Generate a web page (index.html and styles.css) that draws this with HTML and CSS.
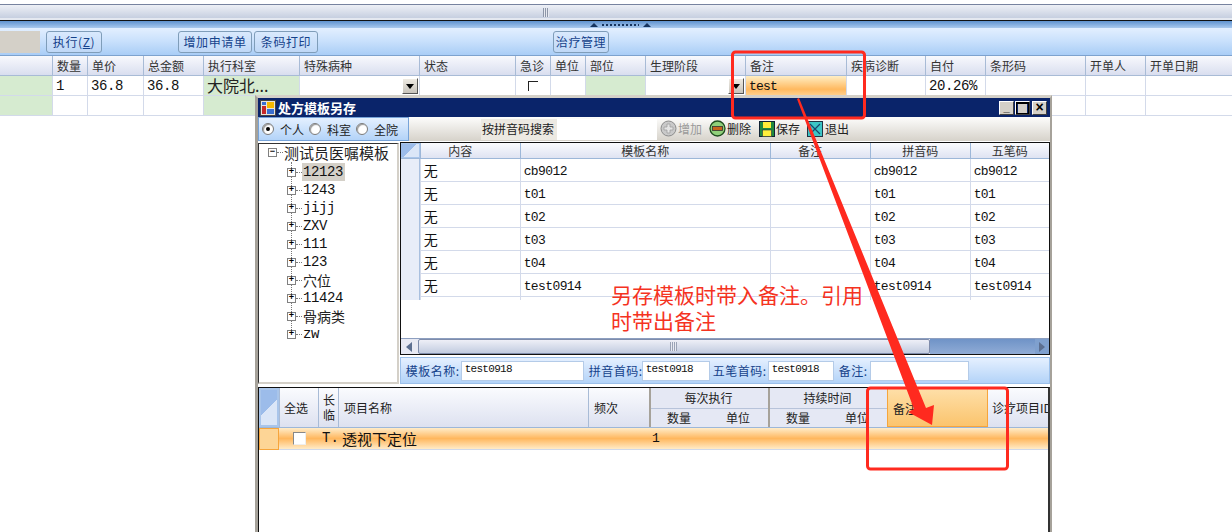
FILE: index.html
```html
<!DOCTYPE html>
<html lang="zh">
<head>
<meta charset="utf-8">
<title>处方模板另存</title>
<link rel="stylesheet" href="styles.css">
</head>
<body>
<div class="page">
  <div class="topband"><span class="grip"></span></div>
  <div class="splitter">
    <span class="tri"></span><span class="dots"></span><span class="tri"></span>
  </div>
  <div class="toolbar">
    <span class="graybox"></span>
    <button class="btn b-exec">执行(<u>Z</u>)</button>
    <button class="btn b-add">增加申请单</button>
    <button class="btn b-code">条码打印</button>
    <button class="btn b-treat">治疗管理</button>
  </div>
  <div class="main-grid m-head">
    <div></div><div>数量</div><div>单价</div><div>总金额</div><div>执行科室</div><div>特殊病种</div><div>状态</div><div>急诊</div><div>单位</div><div>部位</div><div>生理阶段</div><div>备注</div><div>疾病诊断</div><div>自付</div><div>条形码</div><div>开单人</div><div>开单日期</div>
  </div>
  <div class="main-grid m-row">
    <div class="green"></div><div class="lat">1</div><div class="lat">36.8</div><div class="lat">36.8</div><div class="green big">大院北...</div>
    <div class="combo"><span class="drop"></span></div><div></div><div class="center"><span class="chk"></span></div><div></div><div class="green"></div>
    <div class="combo"><span class="drop"></span></div><div class="lat orange">test</div><div></div><div class="lat">20.26%</div><div></div><div></div><div></div>
  </div>
  <div class="main-grid m-row">
    <div class="green"></div><div></div><div></div><div></div><div class="green"></div><div></div><div></div><div></div><div></div><div class="green"></div><div></div><div></div><div></div><div></div><div></div><div></div><div></div>
  </div>

  <section class="window">
    <header class="title">
      <svg class="appicon" width="16" height="16" viewBox="0 0 16 16"><rect x=".5" y=".5" width="15" height="15" fill="#e8e4dc" stroke="#444"/><rect x="2" y="6" width="4" height="8" fill="#c62828"/><rect x="7" y="2" width="7" height="6" fill="#f5b800"/><rect x="7" y="9" width="7" height="5" fill="#3a6fd0"/><rect x="2" y="2" width="4" height="3" fill="#3a6fd0"/></svg>
      <span class="title-text">处方模板另存</span>
      <span class="wbtns"><span class="wbtn">_</span><span class="wbtn wmax"></span><span class="wbtn wx">×</span></span>
    </header>
    <div class="tools">
      <div class="radios">
        <span class="radio on"></span><span class="rlabel">个人</span>
        <span class="radio"></span><span class="rlabel">科室</span>
        <span class="radio"></span><span class="rlabel">全院</span>
      </div>
      <span class="searchlabel">按拼音码搜索</span>
      <span class="searchbox"></span>
      <span class="tool t-add disabled">
        <svg width="17" height="17" viewBox="0 0 17 17"><circle cx="8.5" cy="8.5" r="7.5" fill="#c9c9c9" stroke="#8c8c8c"/><path d="M7 4h3v3h3v3h-3v3H7v-3H4V7h3z" fill="#e4e4e4" stroke="#999" stroke-width=".7"/></svg>增加</span>
      <span class="tool t-del">
        <svg width="17" height="17" viewBox="0 0 17 17"><circle cx="8.5" cy="8.5" r="7.5" fill="#8fd07a" stroke="#1f4d1f" stroke-width="1.3"/><rect x="3.5" y="6.5" width="10" height="4" fill="#c8641c" stroke="#333" stroke-width=".8"/></svg>删除</span>
      <span class="tool t-save">
        <svg width="16" height="16" viewBox="0 0 16 16"><rect x=".5" y=".5" width="15" height="15" fill="#1f8a3f" stroke="#123"/><rect x="4" y="1" width="8" height="6" fill="#ffef3a"/><rect x="3.500" y="9" width="9" height="6.500" fill="#ffef3a" stroke="#234" stroke-width=".6"/></svg>保存</span>
      <span class="tool t-exit">
        <svg width="16" height="16" viewBox="0 0 16 16"><rect x=".5" y=".5" width="15" height="15" fill="#3cc6c6" stroke="#234"/><path d="M3 3l10 10M13 3L3 13" stroke="#16466e" stroke-width="1.200"/></svg>退出</span>
    </div>

    <div class="middle">
      <nav class="tree">
        <div class="tree-root"><span class="box">−</span><span class="dash"></span><span>测试员医嘱模板</span></div>
        <div class="tree-list">
          <div class="ti"><span class="box">+</span><span class="dash"></span><span class="lbl lat-t sel">12123</span></div>
          <div class="ti"><span class="box">+</span><span class="dash"></span><span class="lbl lat-t">1243</span></div>
          <div class="ti"><span class="box">+</span><span class="dash"></span><span class="lbl lat-t">jijj</span></div>
          <div class="ti"><span class="box">+</span><span class="dash"></span><span class="lbl lat-t">ZXV</span></div>
          <div class="ti"><span class="box">+</span><span class="dash"></span><span class="lbl lat-t">111</span></div>
          <div class="ti"><span class="box">+</span><span class="dash"></span><span class="lbl lat-t">123</span></div>
          <div class="ti"><span class="box">+</span><span class="dash"></span><span class="lbl">穴位</span></div>
          <div class="ti"><span class="box">+</span><span class="dash"></span><span class="lbl lat-t">11424</span></div>
          <div class="ti"><span class="box">+</span><span class="dash"></span><span class="lbl">骨病类</span></div>
          <div class="ti"><span class="box">+</span><span class="dash"></span><span class="lbl lat-t">zw</span></div>
        </div>
      </nav>
      <div class="rightcol">
        <div class="tgrid">
          <div class="t-row t-head"><div class="corner"></div><div class="off">内容</div><div>模板名称</div><div class="off">备注</div><div>拼音码</div><div>五笔码</div></div>
          <div class="t-row t-body"><div class="rh"></div><div class="cjk">无</div><div class="lat">cb9012</div><div></div><div class="lat">cb9012</div><div class="lat">cb9012</div></div>
          <div class="t-row t-body"><div class="rh"></div><div class="cjk">无</div><div class="lat">t01</div><div></div><div class="lat">t01</div><div class="lat">t01</div></div>
          <div class="t-row t-body"><div class="rh"></div><div class="cjk">无</div><div class="lat">t02</div><div></div><div class="lat">t02</div><div class="lat">t02</div></div>
          <div class="t-row t-body"><div class="rh"></div><div class="cjk">无</div><div class="lat">t03</div><div></div><div class="lat">t03</div><div class="lat">t03</div></div>
          <div class="t-row t-body"><div class="rh"></div><div class="cjk">无</div><div class="lat">t04</div><div></div><div class="lat">t04</div><div class="lat">t04</div></div>
          <div class="t-row t-body"><div class="rh"></div><div class="cjk">无</div><div class="lat">test0914</div><div></div><div class="lat">test0914</div><div class="lat">test0914</div></div>
          <div class="hscroll">
            <span class="sb-btn"><span class="arrow-l"></span></span>
            <span class="sb-thumb"><span class="sb-grip"></span></span>
            <span class="sb-track"></span>
            <span class="sb-end"><span class="arrow-r"></span></span>
          </div>
        </div>
        <div class="formrow">
          <label class="f1">模板名称:</label><span class="inp i1">test0918</span>
          <label class="f2">拼音首码:</label><span class="inp i2">test0918</span>
          <label class="f3">五笔首码:</label><span class="inp i3">test0918</span>
          <label class="f4">备注:</label><span class="inp i4"></span>
        </div>
      </div>
    </div>

    <div class="lower">
      <div class="l-head">
        <div class="corner big-corner"></div>
        <div class="lh">全选</div>
        <div class="lh vert">长<br>临</div>
        <div class="lh pad5">项目名称</div>
        <div class="lh pad5">频次</div>
        <div class="group"><div class="g-title">每次执行</div><div class="g-sub"><span>数量</span><span>单位</span></div></div>
        <div class="group"><div class="g-title">持续时间</div><div class="g-sub"><span>数量</span><span>单位</span></div></div>
        <div class="lh hl pad5">备注</div>
        <div class="lh last">诊疗项目ID</div>
      </div>
      <div class="l-row">
        <div class="l-rh"></div>
        <div class="l-chk"><span class="chk2"></span></div>
        <div class="l-t">T.</div>
        <div class="l-name">透视下定位</div>
        <div class="l-one">1</div>
      </div>
    </div>
  </section>

  <svg class="marks" width="1232" height="532" viewBox="0 0 1232 532">
    <rect x="732.500" y="52" width="132" height="66" rx="3" fill="none" stroke="#ff2a1f" stroke-width="3"/>
    <rect x="867.500" y="388" width="140" height="81" rx="3" fill="none" stroke="#ff2a1f" stroke-width="3"/>
    <path d="M797 99 L914 409 L908 412 L932 425 L934 405 L926 408 L799 98 Z" fill="#ff2a1f"/>
  </svg>
  <p class="note">另存模板时带入备注。引用<br>时带出备注</p>
</div>
</body>
</html>
```
FILE: styles.css
```css
* { box-sizing: border-box; }
html, body { margin: 0; padding: 0; background: #fff; }
body { font-family: "Noto Sans CJK SC", "Liberation Sans", sans-serif; font-size: 12px; color: #222; }
.page { position: relative; width: 1232px; height: 532px; overflow: hidden; background: #fff; }

.topband { height: 21px; padding: 4px 0 0 543px; display: flex; background: linear-gradient(#fff 0 4px, #77839f 4px 5px, #eef0f6 5px, #c6cfe0 18px, #e4e8f0 18px); border-bottom: 1px solid #111; }
.grip { width: 6px; height: 9px; margin-top: 4px; background: repeating-linear-gradient(90deg, #8d96a8 0 1px, #e6e9f0 1px 2px); }
.splitter { height: 7px; display: flex; align-items: center; padding-left: 590px; gap: 4px; background: linear-gradient(#5f92cf, #a9c9ee); }
.tri { width: 0; height: 0; border: 4px solid transparent; border-top: 0; border-bottom: 4px solid #16345f; }
.dots { width: 37px; height: 2px; background: repeating-linear-gradient(90deg, #16345f 0 2px, transparent 2px 4px); }

.toolbar { height: 28px; display: flex; align-items: center; padding-top: 1px; background: linear-gradient(#e3efff, #c8e0fc 50%, #a9cdf6); border-bottom: 1px solid #7da2ce; }
.graybox { width: 40px; height: 22px; margin-right: 6px; background: #d4d0c8; }
.btn { height: 22px; padding: 0; border: 1px solid #7f9db9; border-radius: 3px; background: linear-gradient(#d9e9fd, #bfd8f7); color: #15428b; font: 12px/18px "Noto Sans CJK SC", sans-serif; letter-spacing: .6px; }
.b-exec { width: 56px; }
.b-add { width: 74px; margin-left: 76px; }
.b-code { width: 64px; margin-left: 2px; }
.b-treat { width: 56px; margin-left: 235px; }

.main-grid { display: grid; grid-template-columns: 52px 35px 56px 60px 96px 120px 96px 35px 35px 60px 100px 101px 79px 60px 100px 60px 87px; }
.m-head { height: 20px; background: linear-gradient(#f8f9fd, #d9deef); border-bottom: 1px solid #a8bbd6; }
.m-head > div { border-left: 1px solid #a8bbd6; padding-left: 4px; line-height: 19px; color: #333; white-space: nowrap; }
.m-head > div:first-child { border-left: 0; }
.m-row { height: 20px; border-bottom: 1px solid #d3daea; }
.m-row > div { border-left: 1px solid #d3daea; min-width: 0; position: relative; height: 19px; }
.m-row > div:first-child { border-left: 0; }
.green { background: #d6ebd0; }
.big { font-size: 16px; line-height: 19px; padding-left: 3px; white-space: nowrap; }
.lat { font: 12px/19px "Liberation Mono", monospace; padding-left: 3px; color: #111; white-space: nowrap; }
.m-row .lat { font-size: 14px; letter-spacing: -.4px; line-height: 21px; }
.m-row .orange { font-size: 13px; letter-spacing: -.8px; line-height: 22px; background: linear-gradient(#ffeec4, #ffb95f 70%, #ffcf8c); }
.combo { display: flex; justify-content: flex-end; align-items: center; padding-right: 1px; }
.drop { position: relative; width: 16px; height: 16px; background: linear-gradient(#eeeae2, #c8c4bc); border: 1px solid; border-color: #fff #555 #555 #fff; }
.drop::after { content: ""; position: absolute; left: 3px; top: 5px; border: 4px solid transparent; border-top: 5px solid #000; border-bottom: 0; }
.center { display: flex; justify-content: center; align-items: center; }
.chk { width: 10px; height: 10px; border-left: 1px solid #222; border-top: 1px solid #222; }

.window { position: absolute; left: 255px; top: 95px; width: 797px; height: 437px; display: flex; flex-direction: column; background: #fff; border-style: solid; border-color: #d4d0c8 #a6a29a #a6a29a #a6a29a; border-width: 3px 2px 0 3px; }
.title { height: 19px; flex: none; display: flex; align-items: center; padding: 0 3px 0 2px; background: #0a246a; color: #fff; }
.appicon { flex: none; }
.title-text { margin-left: 2px; font-weight: 700; font-size: 13px; }
.wbtns { margin-left: auto; display: flex; gap: 1px; }
.wbtn { width: 15px; height: 14px; font: 700 11px/11px "Liberation Sans", sans-serif; text-align: center; color: #000; background: #d4d0c8; border: 1px solid; border-color: #fff #404040 #404040 #fff; }
.wmax { box-shadow: inset 0 2px 0 #000, inset 0 0 0 1px #000; background-clip: content-box; padding: 1px 2px; }
.wx { font-size: 14px; margin-left: 1px; }

.tools { height: 24px; flex: none; display: flex; align-items: center; background: linear-gradient(#fdfdfc, #d6d2ca); }
.radios { width: 151px; height: 24px; display: flex; align-items: center; padding-left: 3px; background: linear-gradient(#e4f0ff, #b3d3f8); border: 1px solid #77a3d8; font-size: 12px; color: #222; }
.rlabel { width: 24px; margin-right: 5px; white-space: nowrap; }
.radio { flex: none; width: 12px; height: 12px; margin-right: 6px; border-radius: 50%; background: #fff; border: 1px solid #7b7b7b; box-shadow: inset 1px 1px 1px #999; position: relative; }
.radio.on::after { content: ""; position: absolute; left: 3px; top: 3px; width: 4px; height: 4px; border-radius: 50%; background: #000; }
.searchlabel { margin-left: 72px; width: 76px; height: 21px; line-height: 19px; padding-left: 1px; background: #ece9e2; font-size: 12px; white-space: nowrap; }
.searchbox { width: 100px; height: 21px; background: #fff; }
.tool { display: inline-flex; align-items: center; gap: 1px; line-height: 22px; padding-bottom: 1px; font-size: 12px; white-space: nowrap; color: #222; }
.t-add { margin-left: 3px; }
.t-del { margin-left: 7px; }
.t-save { margin-left: 8px; }
.t-exit { margin-left: 7px; gap: 2px; }
.disabled { color: #9a9a9a; }

.middle { height: 243px; flex: none; display: flex; }
.tree { position: relative; width: 141px; height: 241px; margin-top: 2px; background: #fff; border-left: 1px solid #333; border-top: 1px solid #333; border-right: 2px solid #d4d0c8; border-bottom: 2px solid #d4d0c8; }
.tree::before { content: ""; position: absolute; left: 32px; top: 18px; height: 172px; border-left: 1px dotted #777; }
.tree-root { position: relative; height: 19px; display: flex; align-items: center; padding: 0 0 2px 9px; font-size: 15px; line-height: 17px; color: #222; white-space: nowrap; }
.tree-list { position: relative; padding-left: 28px; }
.ti { height: 18px; display: flex; align-items: center; white-space: nowrap; }
.box { flex: none; width: 9px; height: 9px; border: 1px solid #808080; background: #fff; font: 9px/7px "Liberation Mono", monospace; font-weight: 700; text-align: center; color: #000; }
.dash { width: 6px; border-top: 1px dotted #777; }
.tree-root .dash { margin-right: 1px; }
.lbl { font-size: 14px; line-height: 18px; padding: 0 1px; color: #222; }
.lat-t { font: 14px/18px "Liberation Mono", monospace; letter-spacing: -.4px; color: #111; }
.sel { background: #d4d0c8; padding-right: 2px; }

.rightcol { margin-left: 1px; width: 652px; display: flex; flex-direction: column; }
.tgrid { height: 214px; margin-top: 1px; display: flex; flex-direction: column; border: 1px solid #111; }
.t-row { display: grid; flex: none; grid-template-columns: 19px 100px 250px 100px 100px 1fr; }
.t-head { height: 16px; background: linear-gradient(#fafbfe, #dfe3f2); border-bottom: 1px solid #9db7d8; }
.t-head > div { text-align: center; line-height: 15px; border-left: 1px solid #9db7d8; color: #333; }
.t-head > div:first-child { border-left: 0; }
.t-head > .off { padding-right: 20px; }
.corner { background: linear-gradient(135deg, #9cbcea 50%, #dbe6f7 50%); border: 1px solid #a9c5ea; }
.t-body { height: 23px; border-bottom: 1px solid #d3daea; }
.t-body > div { border-left: 1px solid #d3daea; }
.t-body > .rh { border-left: 0; background: #e8edf8; border-right: 1px solid #a9c0df; }
.t-body .cjk { font-size: 14px; line-height: 22px; padding-left: 3px; color: #111; }
.t-body .lat { line-height: 26px; padding-left: 3px; font-size: 13px; letter-spacing: -.6px; }
.hscroll { margin-top: auto; height: 16px; display: flex; border-top: 1px solid #8d9fc0; background: #e9ebf4; }
.sb-btn, .sb-end { flex: none; width: 17px; display: flex; align-items: center; justify-content: center; background: #e7e9f3; }
.sb-thumb { width: 512px; display: flex; justify-content: center; align-items: center; background: linear-gradient(#eeeff7, #c2cce0); border: 1px solid #7e8cab; border-radius: 2px; }
.sb-grip { width: 7px; height: 9px; background: repeating-linear-gradient(90deg, #9aa3b6 0 1px, #e8eaf2 1px 2px); }
.sb-track { flex: 1; background: linear-gradient(#6f93c7, #90acd6); }
.sb-end { width: 14px; background: #7fa0ce; }
.arrow-l { border: 5px solid transparent; border-right: 6px solid #5c6f90; border-left: 0; }
.arrow-r { border: 5px solid transparent; border-left: 6px solid #5c6f90; border-right: 0; }

.formrow { height: 27px; margin-top: 2px; display: flex; align-items: center; padding-left: 5px; background: linear-gradient(#e5f0ff, #b3d3f8); border: 1px solid #9cc0ea; color: #15428b; font-size: 12px; letter-spacing: .5px; }
.formrow label { white-space: nowrap; }
.inp { height: 20px; background: #fff; border: 1px solid #b4cbe8; font: 11px/15px "Liberation Mono", monospace; letter-spacing: -.7px; padding-left: 3px; color: #111; }
.i1 { width: 123px; }
.f1 { width: 55px; }
.f2 { width: 53px; margin-left: 5px; }
.i2 { width: 68px; }
.f3 { width: 55px; margin-left: 3px; }
.i3 { width: 66px; }
.f4 { width: 31px; margin-left: 5px; }
.i4 { width: 99px; }

.lower { flex: 1; margin-top: 3px; border: 1px solid #111; border-bottom: 0; border-right: 2px solid #333; display: flex; flex-direction: column; }
.l-head { display: grid; height: 40px; flex: none; grid-template-columns: 20px 39px 20px 250px 61px 119px 119px 101px 1fr; background: linear-gradient(#fafbfe, #dde1f0); border-bottom: 1px solid #9db7d8; }
.big-corner { height: 39px; border: 2px solid #a9c5ea; }
.lh { border-left: 1px solid #a8bbd6; padding-left: 4px; line-height: 39px; color: #222; white-space: nowrap; overflow: hidden; }
.lh.pad5 { padding-left: 5px; }
.vert { line-height: 15px; padding: 4px 0 0 4px; }
.hl { background: linear-gradient(#fedfa8, #fbc46d); border: 1px solid #f6a53c; }
.last { padding-left: 4px; border-left: 0; }
.group { display: flex; flex-direction: column; border-left: 2px solid #a6a29a; background: #e5e8f4; }
.g-title { height: 21px; line-height: 20px; text-align: center; padding-right: 2px; border-bottom: 1px solid #b7c3da; color: #222; }
.g-sub { height: 18px; display: flex; justify-content: space-between; padding: 0 18px 0 16px; line-height: 18px; color: #222; }
.l-row { position: relative; height: 22px; display: flex; align-items: center; border-bottom: 1px solid #cfd8ea; background: linear-gradient(#ffecc9, #ffb75e 50%, #ffebc8); }
.l-rh { width: 20px; height: 22px; background: #fdd596; border: 1px solid #f6a53c; }
.l-chk { width: 43px; display: flex; padding-left: 14px; }
.chk2 { width: 13px; height: 13px; background: #fff; border: 1px solid #888; border-right-color: #eee; border-bottom-color: #eee; }
.l-t { width: 20px; font: 14px/25px "Liberation Mono", monospace; color: #111; }
.l-name { width: 310px; font-size: 15px; line-height: 20px; color: #111; }
.l-one { font: 13px/20px "Liberation Mono", monospace; color: #111; }

.marks { position: absolute; left: 0; top: 0; pointer-events: none; }
.note { position: absolute; left: 611px; top: 281px; margin: 0; font-size: 21px; line-height: 26px; color: #f5331f; white-space: nowrap; }
```
